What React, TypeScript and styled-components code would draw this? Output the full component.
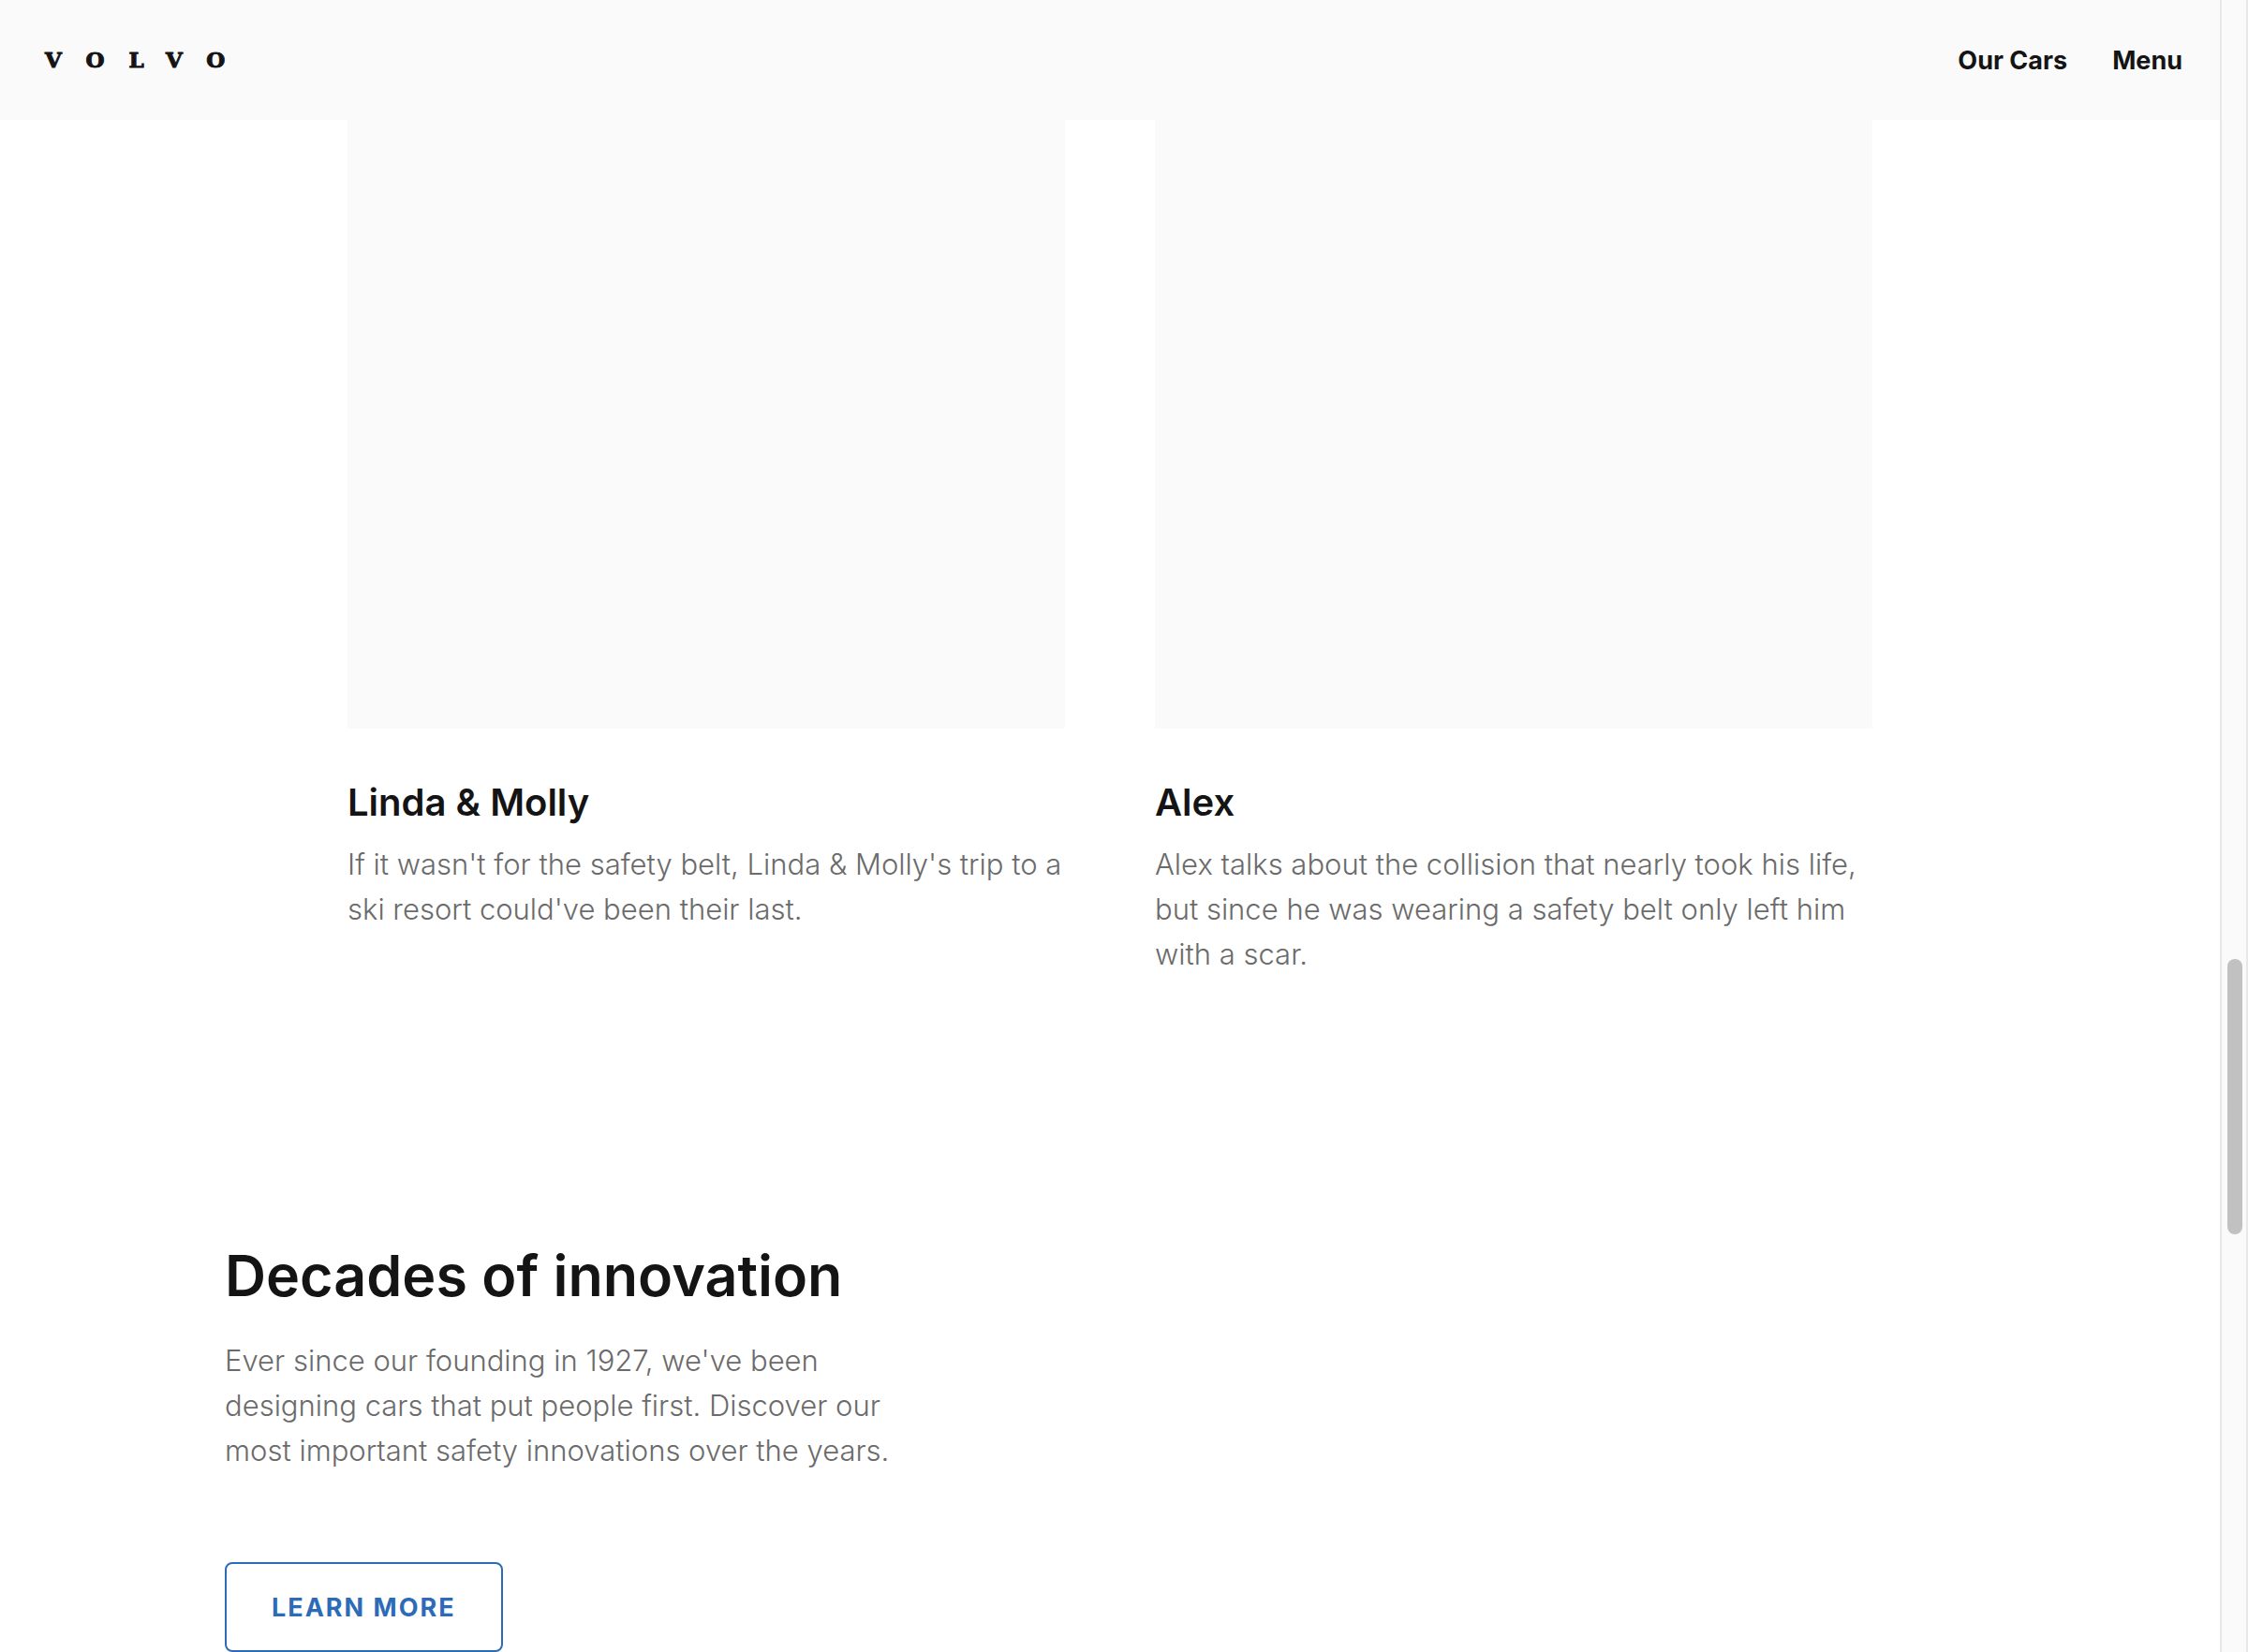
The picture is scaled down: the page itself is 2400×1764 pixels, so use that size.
import React from "react";
import styled, { createGlobalStyle } from "styled-components";

const ink = "#141414";
const muted = "#6b6b6b";
const surface = "#fafafa";
const blue = "#2d6bb7";

const GlobalStyle = createGlobalStyle`
  *, *::before, *::after { box-sizing: border-box; }
  body {
    margin: 0;
    background: #ffffff;
    color: ${ink};
    font-family: Inter, "Liberation Sans", sans-serif;
  }
`;

const Shell = styled.div`
  display: grid;
  grid-template-columns: minmax(0, 1fr) 30px;
  height: 100vh;
`;

const Page = styled.div`
  overflow: hidden;
`;

const Header = styled.header`
  display: flex;
  align-items: center;
  justify-content: space-between;
  height: 128px;
  padding: 2px 40px 0 48px;
  background: ${surface};
`;

const Wordmark = styled.a`
  color: ${ink};
  font-family: "DejaVu Serif", serif;
  font-size: 23px;
  font-weight: 700;
  line-height: 36px;
  padding-bottom: 2px;
  letter-spacing: 26px;
  text-decoration: none;
  -webkit-text-stroke: 1px ${ink};
`;

const Nav = styled.nav`
  display: flex;
  gap: 48px;
`;

const NavButton = styled.button`
  padding: 0;
  border: 0;
  background: none;
  color: ${ink};
  font: inherit;
  font-size: 27px;
  font-weight: 700;
  line-height: 40px;
  cursor: pointer;
`;

const Stories = styled.section`
  display: grid;
  grid-template-columns: repeat(2, minmax(0, 1fr));
  gap: 96px;
  max-width: 1628px;
  margin: 0 auto;
`;

const Media = styled.div`
  aspect-ratio: 766 / 650;
  background: ${surface};
`;

const StoryTitle = styled.h3`
  margin: 48px 0 11px;
  font-size: 40px;
  font-weight: 600;
  line-height: 62px;
`;

const BodyText = styled.p`
  margin: 0;
  color: ${muted};
  font-size: 31px;
  font-weight: 300;
  line-height: 48px;
`;

const Innovation = styled.section`
  max-width: 960px;
  padding: 277px 0 0 240px;
`;

const SectionTitle = styled.h2`
  margin: 0 0 25px;
  font-size: 61px;
  font-weight: 600;
  line-height: 84px;
`;

const OutlineLink = styled.a`
  display: inline-flex;
  align-items: center;
  height: 96px;
  margin-top: 95px;
  padding: 0 48px;
  border: 2px solid ${blue};
  border-radius: 8px;
  color: ${blue};
  font-size: 27px;
  font-weight: 700;
  letter-spacing: 2px;
  text-decoration: none;
  text-transform: uppercase;
`;

const ScrollTrack = styled.div`
  display: grid;
  grid-template-rows: 1024fr 294fr 446fr;
  padding: 0 4px 0 6px;
  border: solid #e8e8e8;
  border-width: 0 2px;
  background: ${surface};
`;

const ScrollThumb = styled.div`
  grid-row: 2;
  border-radius: 8px;
  background: #c1c1c1;
`;

const stories = [
  {
    title: "Linda & Molly",
    text: "If it wasn't for the safety belt, Linda & Molly's trip to a ski resort could've been their last.",
  },
  {
    title: "Alex",
    text: "Alex talks about the collision that nearly took his life, but since he was wearing a safety belt only left him with a scar.",
  },
];

export default function App() {
  return (
    <>
      <GlobalStyle />
      <Shell>
        <Page>
          <Header>
            <Wordmark href="#home">VOLVO</Wordmark>
            <Nav aria-label="Main">
              <NavButton type="button">Our Cars</NavButton>
              <NavButton type="button">Menu</NavButton>
            </Nav>
          </Header>
          <main>
            <Stories>
              {stories.map((story) => (
                <article key={story.title}>
                  <Media />
                  <StoryTitle>{story.title}</StoryTitle>
                  <BodyText>{story.text}</BodyText>
                </article>
              ))}
            </Stories>
            <Innovation>
              <SectionTitle>Decades of innovation</SectionTitle>
              <BodyText>
                Ever since our founding in 1927, we've been designing cars that put people first.
                Discover our most important safety innovations over the years.
              </BodyText>
              <OutlineLink href="#innovations">Learn more</OutlineLink>
            </Innovation>
          </main>
        </Page>
        <ScrollTrack aria-hidden="true">
          <ScrollThumb />
        </ScrollTrack>
      </Shell>
    </>
  );
}
